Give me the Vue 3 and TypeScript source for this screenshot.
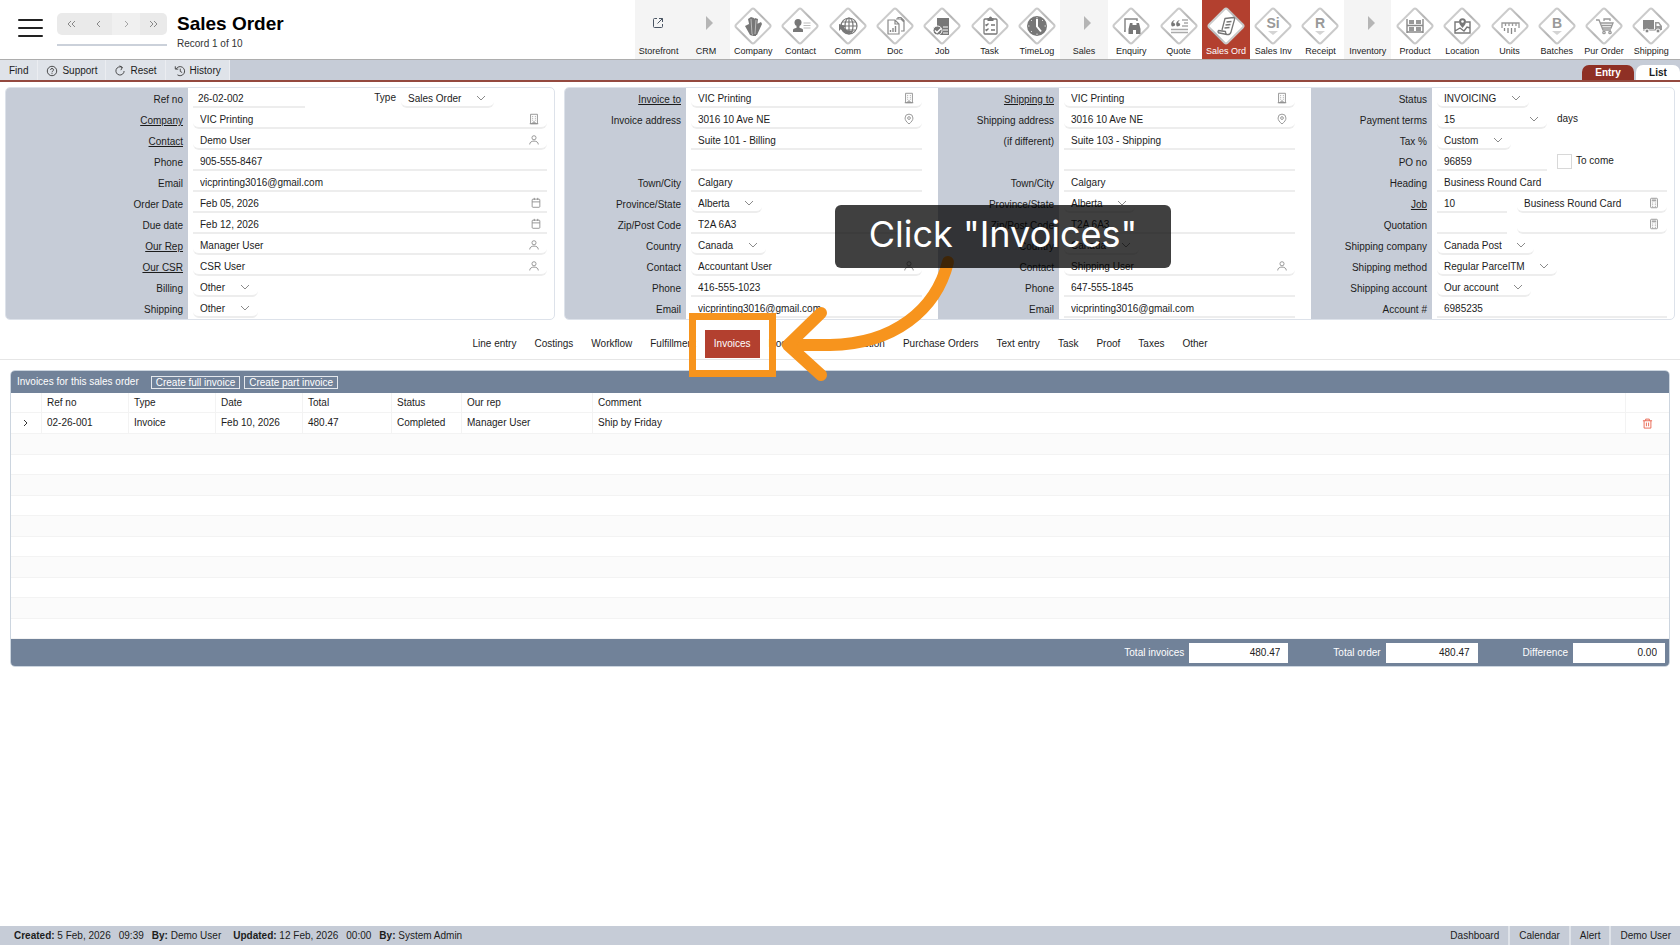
<script setup lang="ts">
interface Control {
  kind: 'text' | 'lookup' | 'date' | 'select' | 'note' | 'check' | 'label'
  value?: string
  icon?: string
  size?: string
}
interface Row {
  label: string
  link?: boolean
  controls: Control[]
}
interface Tile {
  label: string
  art?: string
  group?: boolean
  active?: boolean
}

const text = (value: string, size = 'full'): Control => ({ kind: 'text', value, size })
const lookup = (value: string, icon: string): Control => ({ kind: 'lookup', value, icon, size: 'full' })
const date = (value: string): Control => ({ kind: 'date', value, icon: 'calendar', size: 'full' })
const pick = (value: string, size = 'auto'): Control => ({ kind: 'select', value, size })

const glyphs: Record<string, string> = {
  building: '<path d="M3 1.5h8v11H3zM5 4h1M8 4h1M5 6.2h1M8 6.2h1M5 8.4h1M8 8.4h1M5.8 12.5v-2h2.4v2M2 12.5h10"/>',
  person: '<circle cx="7" cy="4.4" r="2.4"/><path d="M2 12.2c0-2.6 2-3.9 5-3.9s5 1.3 5 3.9"/>',
  pin: '<path d="M7 12.8C4 10.4 2.4 8.200 2.400 5.900a4.600 4.600 0 0 1 9.200 0C11.600 8.200 10 10.400 7 12.800z"/><circle cx="7" cy="5.900" r="1.600"/>',
  calendar: '<rect x="2.500" y="2.500" width="9" height="9.500" rx="1"/><path d="M2.500 5.700h9M5 1v2.500M9 1v2.500"/>',
  job: '<rect x="3" y="1.500" width="8" height="11" rx="1"/><path d="M4.500 3.500h5M4.500 4.500h5M5 7h1M8 7h1M5 9h1M8 9h1M5 11h1M8 11h1"/>',
}

const orderRows: Row[] = [
  { label: 'Ref no', controls: [text('26-02-002', 'ref'), { kind: 'label', value: 'Type' }, pick('Sales Order')] },
  { label: 'Company', link: true, controls: [lookup('VIC Printing', 'building')] },
  { label: 'Contact', link: true, controls: [lookup('Demo User', 'person')] },
  { label: 'Phone', controls: [text('905-555-8467')] },
  { label: 'Email', controls: [text('vicprinting3016@gmail.com')] },
  { label: 'Order Date', controls: [date('Feb 05, 2026')] },
  { label: 'Due date', controls: [date('Feb 12, 2026')] },
  { label: 'Our Rep', link: true, controls: [lookup('Manager User', 'person')] },
  { label: 'Our CSR', link: true, controls: [lookup('CSR User', 'person')] },
  { label: 'Billing', controls: [pick('Other')] },
  { label: 'Shipping', controls: [pick('Other')] },
]

const invoiceRows: Row[] = [
  { label: 'Invoice to', link: true, controls: [lookup('VIC Printing', 'building')] },
  { label: 'Invoice address', controls: [lookup('3016 10 Ave NE', 'pin')] },
  { label: '', controls: [text('Suite 101 - Billing')] },
  { label: '', controls: [text('')] },
  { label: 'Town/City', controls: [text('Calgary')] },
  { label: 'Province/State', controls: [pick('Alberta')] },
  { label: 'Zip/Post Code', controls: [text('T2A 6A3')] },
  { label: 'Country', controls: [pick('Canada')] },
  { label: 'Contact', controls: [lookup('Accountant User', 'person')] },
  { label: 'Phone', controls: [text('416-555-1023')] },
  { label: 'Email', controls: [text('vicprinting3016@gmail.com')] },
]

const shippingRows: Row[] = [
  { label: 'Shipping to', link: true, controls: [lookup('VIC Printing', 'building')] },
  { label: 'Shipping address', controls: [lookup('3016 10 Ave NE', 'pin')] },
  { label: '(if different)', controls: [text('Suite 103 - Shipping')] },
  { label: '', controls: [text('')] },
  { label: 'Town/City', controls: [text('Calgary')] },
  { label: 'Province/State', controls: [pick('Alberta')] },
  { label: 'Zip/Post Code', controls: [text('T2A 6A3')] },
  { label: 'Country', controls: [pick('Canada')] },
  { label: 'Contact', controls: [lookup('Shipping User', 'person')] },
  { label: 'Phone', controls: [text('647-555-1845')] },
  { label: 'Email', controls: [text('vicprinting3016@gmail.com')] },
]

const statusRows: Row[] = [
  { label: 'Status', controls: [pick('INVOICING')] },
  { label: 'Payment terms', controls: [pick('15', 'medium'), { kind: 'note', value: 'days' }] },
  { label: 'Tax %', controls: [pick('Custom')] },
  { label: 'PO no', controls: [text('96859', 'medium'), { kind: 'check', value: 'To come' }] },
  { label: 'Heading', controls: [text('Business Round Card')] },
  { label: 'Job', link: true, controls: [text('10', 'small'), lookup('Business Round Card', 'job')] },
  { label: 'Quotation', controls: [text('', 'small'), lookup('', 'job')] },
  { label: 'Shipping company', controls: [pick('Canada Post')] },
  { label: 'Shipping method', controls: [pick('Regular ParcelTM')] },
  { label: 'Shipping account', controls: [pick('Our account')] },
  { label: 'Account #', controls: [text('6985235')] },
]

const detailColumns = [
  { key: 'invoice', rows: invoiceRows },
  { key: 'shipping', rows: shippingRows },
  { key: 'status', rows: statusRows },
]

const letter = (s: string) =>
  `<text x="19" y="21" text-anchor="middle" font-family="Liberation Sans, Arial, sans-serif" font-weight="bold" font-size="14" fill="#999">${s}</text><path d="M14 24h10l-5 4z" fill="#d4d4d4"/>`

const tiles: Tile[] = [
  { label: 'Storefront', group: true, art: 'store' },
  { label: 'CRM', group: true },
  {
    label: 'Company',
    art: '<g fill="#777"><path d="M11 19l4-2 4 12-3-1zM14 12l3-2 3 1v17l-3-2zM18 14l3-3 3 1-2 17h-3zM23 17l4-2 1 2-5 11h-2z"/></g><path d="M17 12l1 15M22 13l-1 14" stroke="#bbb" stroke-width="1"/>',
  },
  {
    label: 'Contact',
    art: '<g fill="#777"><circle cx="17" cy="15.500" r="3.500"/><path d="M15.500 18h3v3.500h-3z"/><path d="M12 25v-2c0-1.500 2-2 5-2s5 .5 5 2v2z"/></g><path d="M22.500 16h7M22.500 18.500h7M22.500 21h7" stroke="#bbb"/>',
  },
  {
    label: 'Comm',
    art: '<g fill="none" stroke="#777" stroke-width="1.200"><circle cx="20" cy="19" r="8"/><ellipse cx="20" cy="19" rx="4" ry="8"/><path d="M12 19h16M13 15h14M13.500 23h13M20 11v16"/></g><path d="M10 17l7 2-2 1.500c2 3 6 4.500 10 3-4 4-10 4-13-1.500L10 24z" fill="#777"/>',
  },
  {
    label: 'Doc',
    art: '<g fill="none" stroke="#888" stroke-width="1.200"><path d="M12 13h7l4 4v10H12zM19 13v4h4M20 12h5l3 3v9h-3M22 12v-1.500h3l3 3V22"/></g><path d="M14.500 25v-2M17 25v-4M19.500 25v-6" stroke="#888" stroke-width="1.400"/>',
  },
  {
    label: 'Job',
    art: '<path d="M14 11h12v17H14z" fill="#777"/><path d="M20 20h5M20 23h5M20 26h5" stroke="#fff"/><circle cx="14.500" cy="23.500" r="4.500" fill="#777" stroke="#fff"/><path d="M12 23.500l2 2 4-4" stroke="#fff" fill="none" stroke-width="1.500"/>',
  },
  {
    label: 'Task',
    art: '<g fill="none" stroke="#777" stroke-width="1.300"><rect x="13" y="12" width="13" height="15" rx="1"/><path d="M14.500 17.500l1 1 2-2M14.500 22.500l1 1 2-2M20 18h4M20 23h4"/></g><path d="M16.500 11h1.500a1.500 1.500 0 0 1 3 0h1.500v3h-6z" fill="#777"/>',
  },
  {
    label: 'TimeLog',
    art: '<circle cx="19" cy="19" r="10" fill="#777"/><path d="M19 12v7.500l4 5" fill="none" stroke="#fff" stroke-width="2"/><path d="M19 10v1.500M19 26.500V28M10 19h1.500M26.500 19H28M13 13l1 1M25 13l-1 1M13 25l1-1" stroke="#ddd"/>',
  },
  { label: 'Sales', group: true },
  {
    label: 'Enquiry',
    art: '<path d="M13 25V12h12v2M13 24h-1" fill="none" stroke="#888" stroke-width="1.500"/><path d="M18 16h2.500v2h4v-2H27l1.500 6v5h-4.500v-4h-3v4h-4.500v-5z" fill="#777"/>',
  },
  {
    label: 'Quote',
    art: '<path d="M12 19.500c-2-3 0-6 3-6.500-1.500 1-2 2-1.500 3 2.500 0 2.500 3.500-1.500 3.500zM17 19.500c-2-3 0-6 3-6.500-1.500 1-2 2-1.500 3 2.500 0 2.500 3.500-1.500 3.500z" fill="#777"/><path d="M22 13h6M24 16h4M22 19h6M11 22.500h17M11 25.500h17" stroke="#aaa" stroke-width="1.400"/>',
  },
  {
    label: 'Sales Ord',
    active: true,
    art: '<g fill="none" stroke="#777" stroke-width="1.300" stroke-linejoin="round"><path d="M15 23l3-11.500 8.500-1c1 0 1.500 1 1 2L24 25c-.5 2-2 3-4 2.500l-7.500-1.500c-1.500 0-2-2-1-2.500l7 1c0 2 1 3.500 3 3"/><path d="M19.500 15l5-.5M18.500 18l5-.5M17.500 21l5-.5"/></g>',
  },
  { label: 'Sales Inv', art: letter('Si') },
  { label: 'Receipt', art: letter('R') },
  { label: 'Inventory', group: true },
  {
    label: 'Product',
    art: '<path d="M11 12v14M27 12v14M11 18.500h16M11 25h16" stroke="#888" stroke-width="1.400"/><path d="M13 13h5v4h-5zM20 13h5v4h-5zM13 20h5v4h-5zM20 20h5v4h-5z" fill="#999"/>',
  },
  {
    label: 'Location',
    art: '<path d="M16 15h-4v11h15V15h-4M12 24l5-3 4 3 3-4 3 1" fill="none" stroke="#777" stroke-width="1.400"/><path d="M19.500 21c-2-2.500-3.500-4-3.500-6.200a3.500 3.500 0 0 1 7 0c0 2.200-1.500 3.700-3.500 6.200z" fill="#777"/><circle cx="19.500" cy="14.500" r="1.300" fill="#fff"/>',
  },
  {
    label: 'Units',
    art: '<path d="M11 21v-5h17v5M14.500 16v3M18 16v3M21.500 16v3M25 16v3" fill="none" stroke="#999" stroke-width="1.300"/><path d="M13.500 21v3M17 21v5M20.500 21v6M24 21v4" stroke="#888" stroke-width="1.300"/>',
  },
  { label: 'Batches', art: letter('B') },
  {
    label: 'Pur Order',
    art: '<g fill="none" stroke="#999" stroke-width="1.300"><path d="M11 13h3l4 10h8M15 16h13l-2 5h-9M19 14v-2h6v2M16 18.500h11"/><circle cx="19" cy="25.500" r="1.200"/><circle cx="25" cy="25.500" r="1.200"/></g>',
  },
  {
    label: 'Shipping',
    art: '<path d="M11 13h11v9H11z" fill="#888"/><path d="M23 15h4l3 4v4h-7z" fill="#999"/><path d="M24.500 16.500h2l1.500 2.500h-3.500z" fill="#fff"/><path d="M11 23h18" stroke="#888"/><circle cx="15" cy="24" r="2" fill="#888" stroke="#fff"/><circle cx="26" cy="24" r="2" fill="#888" stroke="#fff"/>',
  },
]

const tools = [
  { label: 'Find', art: '' },
  {
    label: 'Support',
    art: '<circle cx="7" cy="7" r="5.500"/><path d="M5.300 5.700c0-2.300 3.500-2.200 3.500 0 0 1.300-1.800 1.400-1.800 2.800M7 9.600v1"/>',
  },
  { label: 'Reset', art: '<path d="M9.500 2.800A4.800 4.800 0 1 0 11.800 7M6.500 1l3.300 1.800L8 6"/>' },
  { label: 'History', art: '<path d="M2.500 4.500A5.300 5.300 0 1 1 4 11.500M1.500 1.500v3.300H5M7.300 4.300V7.500l2.200 1.300"/>' },
]

const tabs = [
  'Line entry', 'Costings', 'Workflow', 'Fulfillment', 'Invoices', 'Documents', 'Production',
  'Purchase Orders', 'Text entry', 'Task', 'Proof', 'Taxes', 'Other',
]

const pager = ['M7 3L4 6l3 3M11 3L8 6l3 3', 'M9 3L6 6l3 3', 'M6 3l3 3-3 3', 'M4 3l3 3-3 3M8 3l3 3-3 3']
const columns = ['Ref no', 'Type', 'Date', 'Total', 'Status', 'Our rep', 'Comment']
const invoice = ['02-26-001', 'Invoice', 'Feb 10, 2026', '480.47', 'Completed', 'Manager User', 'Ship by Friday']
const totals = [
  { label: 'Total invoices', value: '480.47' },
  { label: 'Total order', value: '480.47' },
  { label: 'Difference', value: '0.00' },
]
const panels = [
  { key: 'order', columns: [{ key: 'order', rows: orderRows }] },
  { key: 'details', columns: detailColumns },
]
</script>

<template>
  <div class="page">
    <header class="top">
      <button class="menu" aria-label="Menu"><i></i><i></i><i></i></button>
      <div class="pager">
        <div class="pager-buttons">
          <button v-for="(d, i) in pager" :key="d" :disabled="i === 2" aria-label="Change record">
            <svg viewBox="0 0 14 12" width="14" height="12"><path :d="d" /></svg>
          </button>
        </div>
        <div class="pager-line"></div>
      </div>
      <div class="heading">
        <h1>Sales Order</h1>
        <p>Record 1 of 10</p>
      </div>
      <nav class="tiles">
        <a v-for="t in tiles" :key="t.label" href="#" :class="{ group: t.group, active: t.active }">
          <svg v-if="t.art === 'store'" class="store" viewBox="0 0 12 12" width="12" height="12">
            <path d="M5 1.500H2.500a1 1 0 0 0-1 1v7a1 1 0 0 0 1 1h7a1 1 0 0 0 1-1V7M7 1.500h3.500V5M10.500 1.500L5.500 6.500" />
          </svg>
          <svg v-else-if="t.group" class="arrow" viewBox="0 0 8 14" width="8" height="14"><path d="M0 0l7 7-7 7z" /></svg>
          <span v-else class="diamond">
            <svg viewBox="0 0 38 38" width="38" height="38">
              <defs>
                <linearGradient id="edge" x1="0" y1="0" x2="1" y2="1">
                  <stop offset="0" stop-color="#e2e2e2" />
                  <stop offset="0.5" stop-color="#b4b4b4" />
                  <stop offset="1" stop-color="#dedede" />
                </linearGradient>
              </defs>
              <path
                d="M17.500 2.200q1.500-1.500 3 0l15.300 15.300q1.500 1.500 0 3L20.500 35.800q-1.500 1.500-3 0L2.200 20.500q-1.500-1.500 0-3z"
                fill="#fff" stroke="url(#edge)" stroke-width="2"
              />
            </svg>
            <svg viewBox="0 0 38 38" width="38" height="38" fill="none" v-html="t.art"></svg>
          </span>
          <span class="tile-label">{{ t.label }}</span>
        </a>
      </nav>
    </header>

    <div class="toolbar">
      <button v-for="t in tools" :key="t.label">
        <svg v-if="t.art" viewBox="0 0 14 14" width="12" height="12" v-html="t.art"></svg>{{ t.label }}
      </button>
      <div class="views">
        <button class="on">Entry</button>
        <button>List</button>
      </div>
    </div>

    <main>
      <section class="panels">
        <form v-for="p in panels" :key="p.key" class="panel" :class="p.key">
          <div v-for="col in p.columns" :key="col.key" class="col">
            <div v-for="(row, r) in col.rows" :key="r" class="row">
              <label class="name" :for="`${col.key}-${r}-0`">
                <a v-if="row.link" href="#">{{ row.label }}</a>
                <template v-else>{{ row.label }}</template>
              </label>
              <div class="controls">
                <template v-for="(c, i) in row.controls" :key="i">
                  <label v-if="c.kind === 'label'" class="inner" :for="`${col.key}-${r}-${i + 1}`">{{ c.value }}</label>
                  <span v-else-if="c.kind === 'note'">{{ c.value }}</span>
                  <label v-else-if="c.kind === 'check'" class="check"><input type="checkbox" />{{ c.value }}</label>
                  <span v-else-if="c.kind === 'select'" class="field round" :class="c.size">
                    <select :id="`${col.key}-${r}-${i}`" :aria-label="row.label"><option>{{ c.value }}</option></select>
                    <svg class="chev" viewBox="0 0 10 6" width="10" height="6"><path d="M1 1l4 4 4-4" /></svg>
                  </span>
                  <span v-else class="field" :class="[c.size, { round: c.kind === 'lookup' }]">
                    <input :id="`${col.key}-${r}-${i}`" type="text" :value="c.value" :aria-label="row.label || 'Address line'" />
                    <svg v-if="c.icon" class="glyph" :class="c.icon" viewBox="0 0 14 14" width="12" height="12" v-html="glyphs[c.icon]"></svg>
                  </span>
                </template>
              </div>
            </div>
          </div>
        </form>
      </section>

      <nav class="tabs">
        <button v-for="t in tabs" :key="t" :class="{ on: t === 'Invoices' }">{{ t }}</button>
      </nav>

      <section class="invoices">
        <div class="bar">
          <h2>Invoices for this sales order</h2>
          <button>Create full invoice</button>
          <button>Create part invoice</button>
        </div>
        <table>
          <colgroup>
            <col class="c-open" /><col class="c-std" /><col class="c-std" /><col class="c-std" /><col class="c-std" />
            <col class="c-status" /><col class="c-rep" /><col /><col class="c-del" />
          </colgroup>
          <thead>
            <tr><th></th><th v-for="c in columns" :key="c">{{ c }}</th><th></th></tr>
          </thead>
          <tbody>
            <tr class="filled">
              <td class="mid">
                <button aria-label="Expand"><svg viewBox="0 0 6 8" width="6" height="8" class="open"><path d="M1 1l3 3-3 3" /></svg></button>
              </td>
              <td v-for="c in invoice" :key="c">{{ c }}</td>
              <td class="mid">
                <button aria-label="Delete">
                  <svg viewBox="0 0 12 12" width="11" height="11" class="trash">
                    <path d="M1 3h10M4 3V1.200h4V3M2.300 3v8h7.400V3M4.800 5v4M7.200 5v4" />
                  </svg>
                </button>
              </td>
            </tr>
            <tr v-for="n in 10" :key="n" class="empty"><td colspan="9"></td></tr>
          </tbody>
        </table>
        <div class="bar totals">
          <label v-for="t in totals" :key="t.label">{{ t.label }}<input type="text" :value="t.value" readonly /></label>
        </div>
      </section>

      <div class="guide">
        <svg viewBox="0 0 300 190" width="300" height="190">
          <path d="M268 62C256 110 214 144 150 145H116" />
          <path d="M141 113L108 145L141 175" />
        </svg>
        <div class="target"></div>
        <div class="tip">Click "Invoices"</div>
      </div>
    </main>

    <footer>
      <p>
        <span><b>Created:</b> 5 Feb, 2026</span><span>09:39</span><span class="by"><b>By:</b> Demo User</span>
        <span><b>Updated:</b> 12 Feb, 2026</span><span>00:00</span><span><b>By:</b> System Admin</span>
      </p>
      <nav><a href="#">Dashboard</a><a href="#">Calendar</a><a href="#">Alert</a><a href="#">Demo User</a></nav>
    </footer>
  </div>
</template>

<style>
body {
  margin: 0;
  background: #fff;
}
</style>

<style scoped>
* {
  box-sizing: border-box;
}
.page {
  display: flex;
  flex-direction: column;
  min-height: 100vh;
  font: 10px/14px "Liberation Sans", Arial, sans-serif;
  color: #1c1c1c;
}
button,
input,
select {
  font: inherit;
  color: inherit;
  margin: 0;
  padding: 0;
  border: 0;
  background: none;
}
a {
  color: inherit;
  text-decoration: none;
}
h1,
h2,
p {
  margin: 0;
}
.top {
  display: flex;
  height: 60px;
  border-bottom: 1px solid #adadad;
}
.menu {
  width: 25px;
  height: 18px;
  margin: 19px 13px 0 18px;
  display: flex;
  flex-direction: column;
  justify-content: space-between;
}
.menu i {
  height: 2px;
  width: 100%;
  border-radius: 1px;
  background: #222;
}
.pager {
  width: 110px;
  margin: 13px 10px 0 1px;
}
.pager-buttons {
  display: flex;
  height: 22px;
  border-radius: 5px;
  overflow: hidden;
  background: #eaeaea;
}
.pager-buttons button {
  flex: 1;
  display: grid;
  place-items: center;
}
.pager-buttons button:disabled {
  background: #f2f2f2;
  opacity: 0.7;
}
.pager svg {
  fill: none;
  stroke: #888;
}
.pager-line {
  height: 2px;
  margin-top: 9px;
  background: #cbd1da;
}
.heading {
  flex: 1;
  color: #333;
}
.heading h1 {
  margin-top: 12px;
  font-size: 19px;
  line-height: 24px;
  color: #000;
}
.heading p {
  margin-top: 1px;
}
.tiles {
  flex: 0 1 1040px;
  margin-right: 5px;
  display: grid;
  grid-template-columns: repeat(22, 1fr);
}
.tiles a {
  display: flex;
  flex-direction: column;
  align-items: center;
  justify-content: flex-end;
  min-width: 0;
}
.tiles .group {
  background: #f4f4f4;
}
.tiles .active {
  background: #b3402f;
  color: #fff;
}
.tile-label {
  font-size: 9px;
  line-height: 12px;
  margin-bottom: 2px;
  white-space: nowrap;
}
.diamond {
  display: grid;
}
.diamond svg {
  grid-area: 1 / 1;
}
.store {
  fill: none;
  stroke: #4a5563;
  margin: 0 2px 16px 0;
}
.arrow {
  fill: #b5b5b5;
  margin: 0 0 15px 8px;
}
.toolbar {
  display: flex;
  height: 22px;
  background: #c6ccd7;
  border-bottom: 2px solid #94493f;
}
.toolbar > button {
  display: flex;
  align-items: center;
  gap: 4px;
  padding: 2px 8px 0;
  background: #dfe3e9;
  border-right: 1px solid #ebedf1;
}
.toolbar > button:first-child {
  padding: 2px 9px 0;
}
.toolbar svg {
  fill: none;
  stroke: #333;
}
.views {
  flex: 1;
  display: flex;
  justify-content: flex-end;
  align-items: flex-end;
  gap: 2px;
}
.views button {
  height: 15px;
  width: 44px;
  border-radius: 7px 7px 0 0;
  background: #fff;
  font-weight: bold;
}
.views .on {
  width: 52px;
  background: #8f3025;
  color: #fff;
}
main {
  position: relative;
  flex: 1;
}
.panels {
  display: grid;
  grid-template-columns: 550fr 1111fr;
  gap: 9px;
  padding: 5px 5px 0;
}
.panel {
  display: grid;
  border: 1px solid #dde2ea;
  border-radius: 5px;
  overflow: hidden;
}
.panel.details {
  grid-template-columns: 373fr 373fr 363fr;
}
.col {
  min-width: 0;
}
.row {
  display: flex;
  height: 21px;
}
.name {
  flex: 0 0 121px;
  padding: 5px 5px 0 0;
  background: #c6ccd7;
  text-align: right;
}
.name a {
  text-decoration: underline;
}
.order .name {
  flex-basis: 182px;
}
.controls {
  flex: 1;
  min-width: 0;
  display: flex;
  align-items: center;
  gap: 10px;
  padding: 0 16px 1px 5px;
}
.order .controls,
.col:last-child .controls {
  padding-right: 7px;
}
.inner {
  width: 81px;
  margin-right: -5px;
  text-align: right;
}
.field {
  display: grid;
  grid-template-columns: 1fr auto;
  align-items: center;
  height: 20px;
  border-bottom: 2px solid #ededed;
}
.field.round {
  border-radius: 0 0 6px 6px;
}
.field.full {
  flex: 1;
  min-width: 0;
}
.field.ref {
  width: 112px;
}
.field.medium {
  width: 110px;
}
.field.small {
  width: 70px;
}
.field input,
.field select {
  grid-area: 1 / 1 / 2 / 3;
  width: 100%;
  min-width: 0;
  height: 18px;
  padding: 2px 7px 0;
  appearance: none;
}
.field select {
  padding: 3px 32px 0 7px;
}
.field.ref input {
  padding-left: 5px;
}
.field svg {
  grid-area: 1 / 2;
  margin-top: 2px;
  fill: none;
  stroke: #8a8a8a;
  pointer-events: none;
}
.chev {
  margin-right: 8px;
}
.glyph {
  margin-right: 7px;
}
.glyph.calendar {
  margin-right: 5px;
}
.check {
  display: flex;
  align-items: center;
  gap: 4px;
}
.check input {
  appearance: none;
  width: 15px;
  height: 15px;
  border: 1px solid #d8d8d8;
  background: #fff;
}
.tabs {
  display: flex;
  justify-content: center;
  height: 40px;
  padding: 10px 0 0;
  border-bottom: 1px solid #e6e6e6;
}
.tabs button {
  height: 28px;
  padding: 0 9px;
  white-space: nowrap;
}
.tabs .on {
  background: #b3402f;
  color: #fff;
}
.invoices {
  margin: 10px 10px 0;
  border: 1px solid #ccd5df;
  border-radius: 5px;
  overflow: hidden;
}
.bar {
  display: flex;
  align-items: center;
  height: 22px;
  padding-left: 6px;
  background: #718299;
  color: #fff;
}
.bar h2 {
  margin-right: 12px;
  font-size: 10px;
  font-weight: normal;
}
.bar button {
  height: 13px;
  line-height: 11px;
  padding: 0 4px;
  margin-right: 4px;
  border: 1px solid #e4e8ed;
}
table {
  width: 100%;
  border-collapse: separate;
  border-spacing: 0;
  table-layout: fixed;
}
.c-open {
  width: 31px;
}
.c-std {
  width: 87px;
}
.c-std:nth-child(5) {
  width: 89px;
}
.c-status {
  width: 70px;
}
.c-rep {
  width: 131px;
}
.c-del {
  width: 43px;
}
th,
td {
  height: 21px;
  padding: 0 5px;
  text-align: left;
  font-weight: normal;
  border-right: 1px solid #f3f3f3;
  border-bottom: 1px solid #f3f3f3;
}
th {
  height: 20px;
}
th:last-child,
td:last-child {
  border-right: 0;
}
.mid {
  text-align: center;
}
.mid button {
  display: inline-grid;
  vertical-align: middle;
}
.open {
  fill: none;
  stroke: #333;
}
.trash {
  fill: none;
  stroke: #e8614c;
}
.empty:nth-child(odd) td {
  height: 20px;
}
.empty:nth-child(even) td {
  background: #fbfbfb;
}
.bar.totals {
  height: 27px;
  justify-content: flex-end;
  gap: 45px;
  padding-right: 4px;
}
.totals label {
  display: flex;
  align-items: center;
  gap: 5px;
}
.totals input {
  width: 92px;
  height: 20px;
  padding: 0 8px;
  background: #fff;
  color: #222;
  text-align: right;
}
.totals label:first-child input {
  width: 99px;
}
.guide {
  position: absolute;
  left: 50%;
  top: 118px;
  margin-left: -160px;
  width: 500px;
  pointer-events: none;
}
.guide svg {
  display: block;
  fill: none;
  stroke: #f7941d;
  stroke-width: 12px;
  stroke-linecap: round;
  stroke-linejoin: round;
}
.target {
  position: absolute;
  left: 9px;
  top: 113px;
  width: 87px;
  height: 64px;
  border: 7px solid #f7941d;
}
.tip {
  position: absolute;
  left: 155px;
  top: 5px;
  width: 336px;
  height: 63px;
  border-radius: 6px;
  background: rgba(0, 0, 0, 0.75);
  color: #fff;
  font: 36px/58px Inter, "Liberation Sans", sans-serif;
  text-align: center;
  white-space: nowrap;
}
footer {
  display: flex;
  justify-content: space-between;
  height: 19px;
  line-height: 20px;
  background: #c6ccd7;
}
footer p {
  display: flex;
  gap: 8px;
  padding-left: 14px;
}
.by {
  margin-right: 4px;
}
footer a {
  display: inline-block;
  height: 19px;
  padding: 0 9px;
}
footer a + a {
  border-left: 2px solid #dfe3e9;
}
</style>
